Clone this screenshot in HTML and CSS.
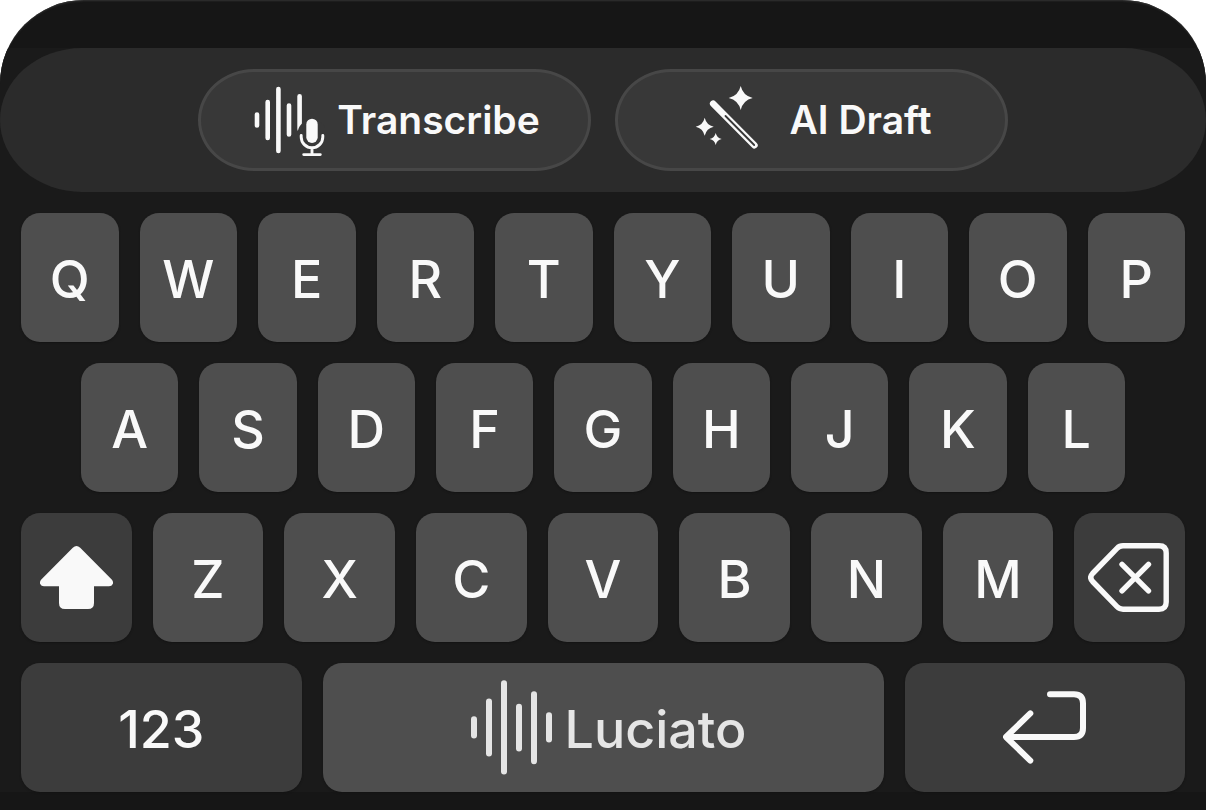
FILE: index.html
```html
<!DOCTYPE html>
<html lang="en">
<head>
<meta charset="utf-8">
<meta name="viewport" content="width=device-width, initial-scale=1">
<title>Luciato keyboard</title>
<link rel="stylesheet" href="styles.css">
</head>
<body>
<main class="panel">
  <div class="board">
    <div class="toolbar">
      <button class="pill" type="button">
        <svg width="76" height="76" viewBox="-3 0 76 76" fill="none" stroke="currentColor" stroke-linecap="round" aria-hidden="true">
          <path stroke-width="4.6" d="M5 32.6v10.8M15.7 20v36M26.4 7v62M37 23.600v28.800M47.600 14.300v33"/>
          <path class="mic-cut" stroke-width="7" d="M49 52a11 11 0 0 1 22 0"/>
          <rect x="54.300" y="36.700" width="11.400" height="24.300" rx="5.700" fill="currentColor" stroke="none"/>
          <path stroke-width="2.900" d="M49.200 53.500v1.500a10.800 10.800 0 0 0 21.600 0v-1.500M60 66v6M51.700 72.600h16.600"/>
        </svg>
        <span>Transcribe</span>
      </button>
      <button class="pill" type="button">
        <svg width="86" height="76" viewBox="0 0 86 76" fill="currentColor" aria-hidden="true">
          <path d="M49.700 4q2.300 9.700 12 12q-9.700 2.300-12 12q-2.300-9.700-12-12q9.700-2.300 12-12z"/>
          <path d="M13.700 35.700q1.700 7.300 9 9q-7.300 1.700-9 9q-1.700-7.300-9-9q7.300-1.700 9-9z"/>
          <path d="M24.700 51q1.100 4.900 6 6q-4.900 1.100-6 6q-1.100-4.900-6-6q4.900-1.100 6-6z"/>
          <g fill="none" stroke-linecap="round">
            <path stroke="currentColor" stroke-width="6.600" d="M22.200 21.700L63.400 63.200"/>
            <path class="wand-slot" stroke-width="1.800" d="M34.500 34L63.200 63"/>
          </g>
        </svg>
        <span>AI Draft</span>
      </button>
    </div>

    <div class="keys">
      <div class="row">
        <button class="key" type="button">Q</button>
        <button class="key" type="button">W</button>
        <button class="key" type="button">E</button>
        <button class="key" type="button">R</button>
        <button class="key" type="button">T</button>
        <button class="key" type="button">Y</button>
        <button class="key" type="button">U</button>
        <button class="key" type="button">I</button>
        <button class="key" type="button">O</button>
        <button class="key" type="button">P</button>
      </div>
      <div class="row row-inset">
        <button class="key" type="button">A</button>
        <button class="key" type="button">S</button>
        <button class="key" type="button">D</button>
        <button class="key" type="button">F</button>
        <button class="key" type="button">G</button>
        <button class="key" type="button">H</button>
        <button class="key" type="button">J</button>
        <button class="key" type="button">K</button>
        <button class="key" type="button">L</button>
      </div>
      <div class="row">
        <button class="key key-dark key-icon" type="button" aria-label="Shift">
          <svg width="73" height="63" viewBox="0 0 73 63" fill="currentColor" aria-hidden="true">
            <path d="M32.800 1.700Q36.500-1.700 40.200 1.700L71.700 33.400Q73.600 35.600 72.800 38Q71.800 40.300 69 40.300H54V57Q54 63 48 63H25Q19 63 19 57V40.300H4Q1.200 40.300.2 38Q-.6 35.600 1.300 33.400z"/>
          </svg>
        </button>
        <button class="key" type="button">Z</button>
        <button class="key" type="button">X</button>
        <button class="key" type="button">C</button>
        <button class="key" type="button">V</button>
        <button class="key" type="button">B</button>
        <button class="key" type="button">N</button>
        <button class="key" type="button">M</button>
        <button class="key key-dark key-icon" type="button" aria-label="Delete">
          <svg width="83" height="69" viewBox="0 0 83 69" fill="none" stroke="currentColor" stroke-width="5.400" stroke-linecap="round" stroke-linejoin="round" aria-hidden="true">
            <path d="M35 2.800H71Q78.200 2.800 78.200 10V59Q78.200 66.200 71 66.200H35Q31.500 66.200 29 63.700L4.600 38.500Q.9 34.500 4.600 30.500L29 5.300Q31.500 2.800 35 2.800z"/>
            <path d="M34 21.300L60.500 47.800M60.500 21.300L34 47.800"/>
          </svg>
        </button>
      </div>
      <div class="row row-bottom">
        <button class="key key-dark" type="button">123</button>
        <button class="key key-space" type="button">
          <svg width="82" height="100" viewBox="0 0 82 100" fill="none" stroke="currentColor" stroke-width="6" stroke-linecap="round" aria-hidden="true">
            <path d="M3 39.200v16.300M18 21.500v52M33 3.200v88.300M48 26.800v41.700M63 14.200v67M78 35.200v24.300"/>
          </svg>
          <span>Luciato</span>
        </button>
        <button class="key key-dark key-icon" type="button" aria-label="Return">
          <svg width="83" height="73" viewBox="0 0 83 73" fill="none" stroke="currentColor" stroke-width="6" stroke-linecap="round" stroke-linejoin="round" aria-hidden="true">
            <path d="M47 3.200H71Q80 3.200 80 12.200V37Q80 46 71 46H4M27.300 22.400L3 46L27.300 69.600"/>
          </svg>
        </button>
      </div>
    </div>
  </div>
</main>
</body>
</html>
```
FILE: styles.css
```css
* {
  box-sizing: border-box;
}

body {
  margin: 0;
  background: #fff;
  font-family: Inter, "Liberation Sans", sans-serif;
  color: #f9f9f9;
}

.panel {
  display: flex;
  flex-direction: column;
  min-height: 100vh;
  padding: 48px 0 18px;
  background: #161616;
  border-radius: 84px 84px 0 0;
  box-shadow: inset 0 2px 2px -1px #333;
  overflow: hidden;
}

.board {
  flex: 1;
  display: flex;
  flex-direction: column;
  gap: 21px;
  background: #1a1a1a;
}

.toolbar {
  display: flex;
  justify-content: center;
  gap: 24px;
  padding: 21px;
  background: #2b2b2b;
  border-radius: 82px / 72px;
}

button {
  margin: 0;
  padding: 0;
  border: 0;
  font: inherit;
  color: inherit;
}

.pill {
  display: flex;
  align-items: center;
  justify-content: center;
  gap: 12px;
  flex: 0 1 393px;
  height: 102px;
  border: 3px solid #474747;
  border-radius: 56px / 51px;
  background: #383838;
  font-size: 39px;
  font-weight: 600;
  line-height: 48px;
  white-space: nowrap;
}

.mic-cut,
.wand-slot {
  stroke: #383838;
}

.keys {
  flex: 1;
  display: flex;
  flex-direction: column;
  gap: 21px;
  padding: 0 21px;
}

.row {
  flex: 1;
  display: flex;
  gap: 21px;
}

.row-inset {
  padding: 0 60px;
}

.row-bottom {
  display: grid;
  grid-template-columns: 1fr 2fr 1fr;
}

.key {
  flex: 1 1 0;
  min-width: 0;
  min-height: 129px;
  display: flex;
  align-items: center;
  justify-content: center;
  padding-top: 4px;
  border-radius: 19px;
  background: #4e4e4e;
  box-shadow: 0 1px 2px #141414;
  font-size: 52px;
  font-weight: 500;
  line-height: 64px;
}

.key-dark {
  background: #3c3c3c;
}

.key-icon {
  padding-top: 0;
}

.key-space {
  gap: 12px;
  padding-left: 11px;
  color: #e5e5e5;
  font-weight: 450;
}
```
